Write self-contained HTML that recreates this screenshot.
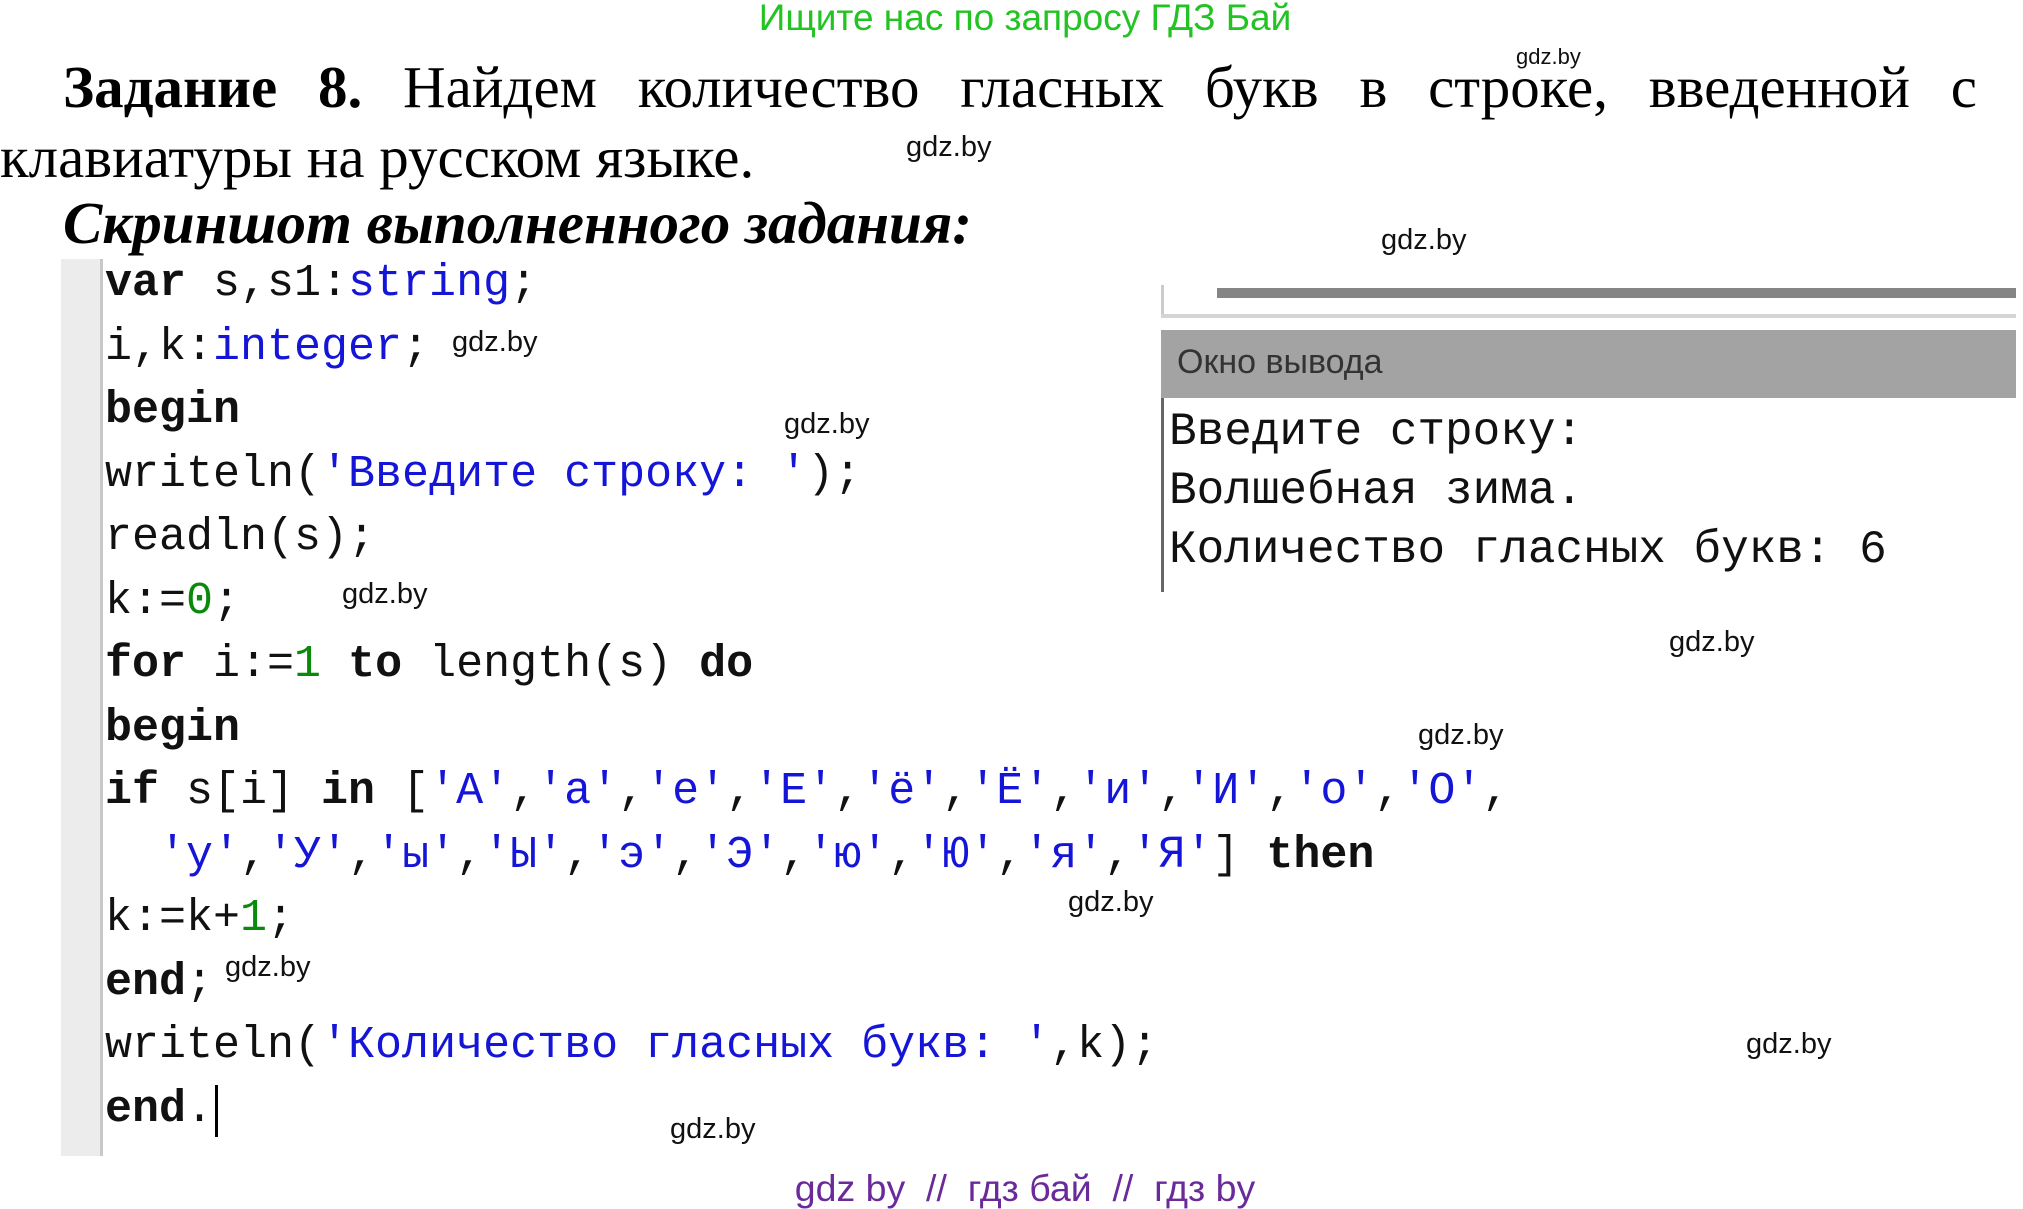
<!DOCTYPE html>
<html><head><meta charset="utf-8"><style>
body{margin:0;width:2023px;height:1200px;background:#fff;position:relative;overflow:hidden;font-family:"Liberation Sans",sans-serif}
.a{position:absolute;white-space:pre}
.w{position:absolute;font-family:"Liberation Sans",sans-serif;font-size:29px;color:#111;white-space:pre;line-height:1}
.ser{font-family:"Liberation Serif",serif;font-size:59px;color:#000}
.code{position:absolute;left:105px;top:252px;font-family:"Liberation Mono",monospace;font-size:45px;line-height:63.5px;color:#111;white-space:pre}
.k{font-weight:bold}.s{color:#1515d8}.n{color:#0a8a0a}
.out{font-family:"Liberation Mono",monospace;font-size:46px;color:#111;line-height:59px;white-space:pre}
</style></head><body>
<div class="a" style="left:0;width:2050px;text-align:center;top:-1px;font-size:37px;color:#22c322;line-height:38px">Ищите нас по запросу ГДЗ Бай</div>
<div class="a ser" style="left:63px;width:1914px;top:52px;line-height:70px;text-align:justify;text-align-last:justify;white-space:normal"><b>Задание 8.</b> Найдем количество гласных букв в строке, введенной с</div>
<div class="a ser" style="left:0;top:122px;line-height:70px">клавиатуры на русском языке.</div>
<div class="a ser" style="left:63px;top:188px;line-height:70px;font-weight:bold;font-style:italic">Скриншот выполненного задания:</div>

<div class="a" style="left:61px;top:259px;width:40px;height:897px;background:#ececec"></div>
<div class="a" style="left:100px;top:259px;width:3px;height:897px;background:#c8c8c8"></div>
<div class="code"><span class="k">var</span> s,s1:<span class="s">string</span>;
i,k:<span class="s">integer</span>;
<span class="k">begin</span>
writeln(<span class="s">'Введите строку: '</span>);
readln(s);
k:=<span class="n">0</span>;
<span class="k">for</span> i:=<span class="n">1</span> <span class="k">to</span> length(s) <span class="k">do</span>
<span class="k">begin</span>
<span class="k">if</span> s[i] <span class="k">in</span> [<span class="s">'А'</span>,<span class="s">'а'</span>,<span class="s">'е'</span>,<span class="s">'Е'</span>,<span class="s">'ё'</span>,<span class="s">'Ё'</span>,<span class="s">'и'</span>,<span class="s">'И'</span>,<span class="s">'о'</span>,<span class="s">'О'</span>,
  <span class="s">'у'</span>,<span class="s">'У'</span>,<span class="s">'ы'</span>,<span class="s">'Ы'</span>,<span class="s">'э'</span>,<span class="s">'Э'</span>,<span class="s">'ю'</span>,<span class="s">'Ю'</span>,<span class="s">'я'</span>,<span class="s">'Я'</span>] <span class="k">then</span>
k:=k+<span class="n">1</span>;
<span class="k">end</span>;
writeln(<span class="s">'Количество гласных букв: '</span>,k);
<span class="k">end</span>.</div>
<div class="a" style="left:215px;top:1085px;width:3px;height:52px;background:#000"></div>

<div class="a" style="left:1161px;top:285px;width:3px;height:30px;background:#ccc"></div>
<div class="a" style="left:1217px;top:288px;width:799px;height:10px;background:#858585"></div>
<div class="a" style="left:1161px;top:314px;width:855px;height:4px;background:#d4d4d4"></div>
<div class="a" style="left:1161px;top:330px;width:855px;height:68px;background:#a3a3a3"></div>
<div class="a" style="left:1177px;top:342px;font-size:34px;color:#333;line-height:40px">Окно вывода</div>
<div class="a" style="left:1161px;top:398px;width:3px;height:194px;background:#666"></div>
<div class="a out" style="left:1169px;top:403px">Введите строку:
Волшебная зима.
Количество гласных букв: 6</div>

<div class="w" style="left:1516px;top:46px;font-size:22px">gdz.by</div>
<div class="w" style="left:906px;top:133px">gdz.by</div>
<div class="w" style="left:1381px;top:226px">gdz.by</div>
<div class="w" style="left:452px;top:328px">gdz.by</div>
<div class="w" style="left:784px;top:410px">gdz.by</div>
<div class="w" style="left:342px;top:580px">gdz.by</div>
<div class="w" style="left:1669px;top:628px">gdz.by</div>
<div class="w" style="left:1418px;top:721px">gdz.by</div>
<div class="w" style="left:1068px;top:888px">gdz.by</div>
<div class="w" style="left:225px;top:953px">gdz.by</div>
<div class="w" style="left:1746px;top:1030px">gdz.by</div>
<div class="w" style="left:670px;top:1115px">gdz.by</div>
<div class="a" style="left:0;width:2050px;text-align:center;top:1168px;font-size:37.5px;color:#6a2a9a;line-height:40px">gdz by  //  гдз бай  //  гдз by</div>
</body></html>
